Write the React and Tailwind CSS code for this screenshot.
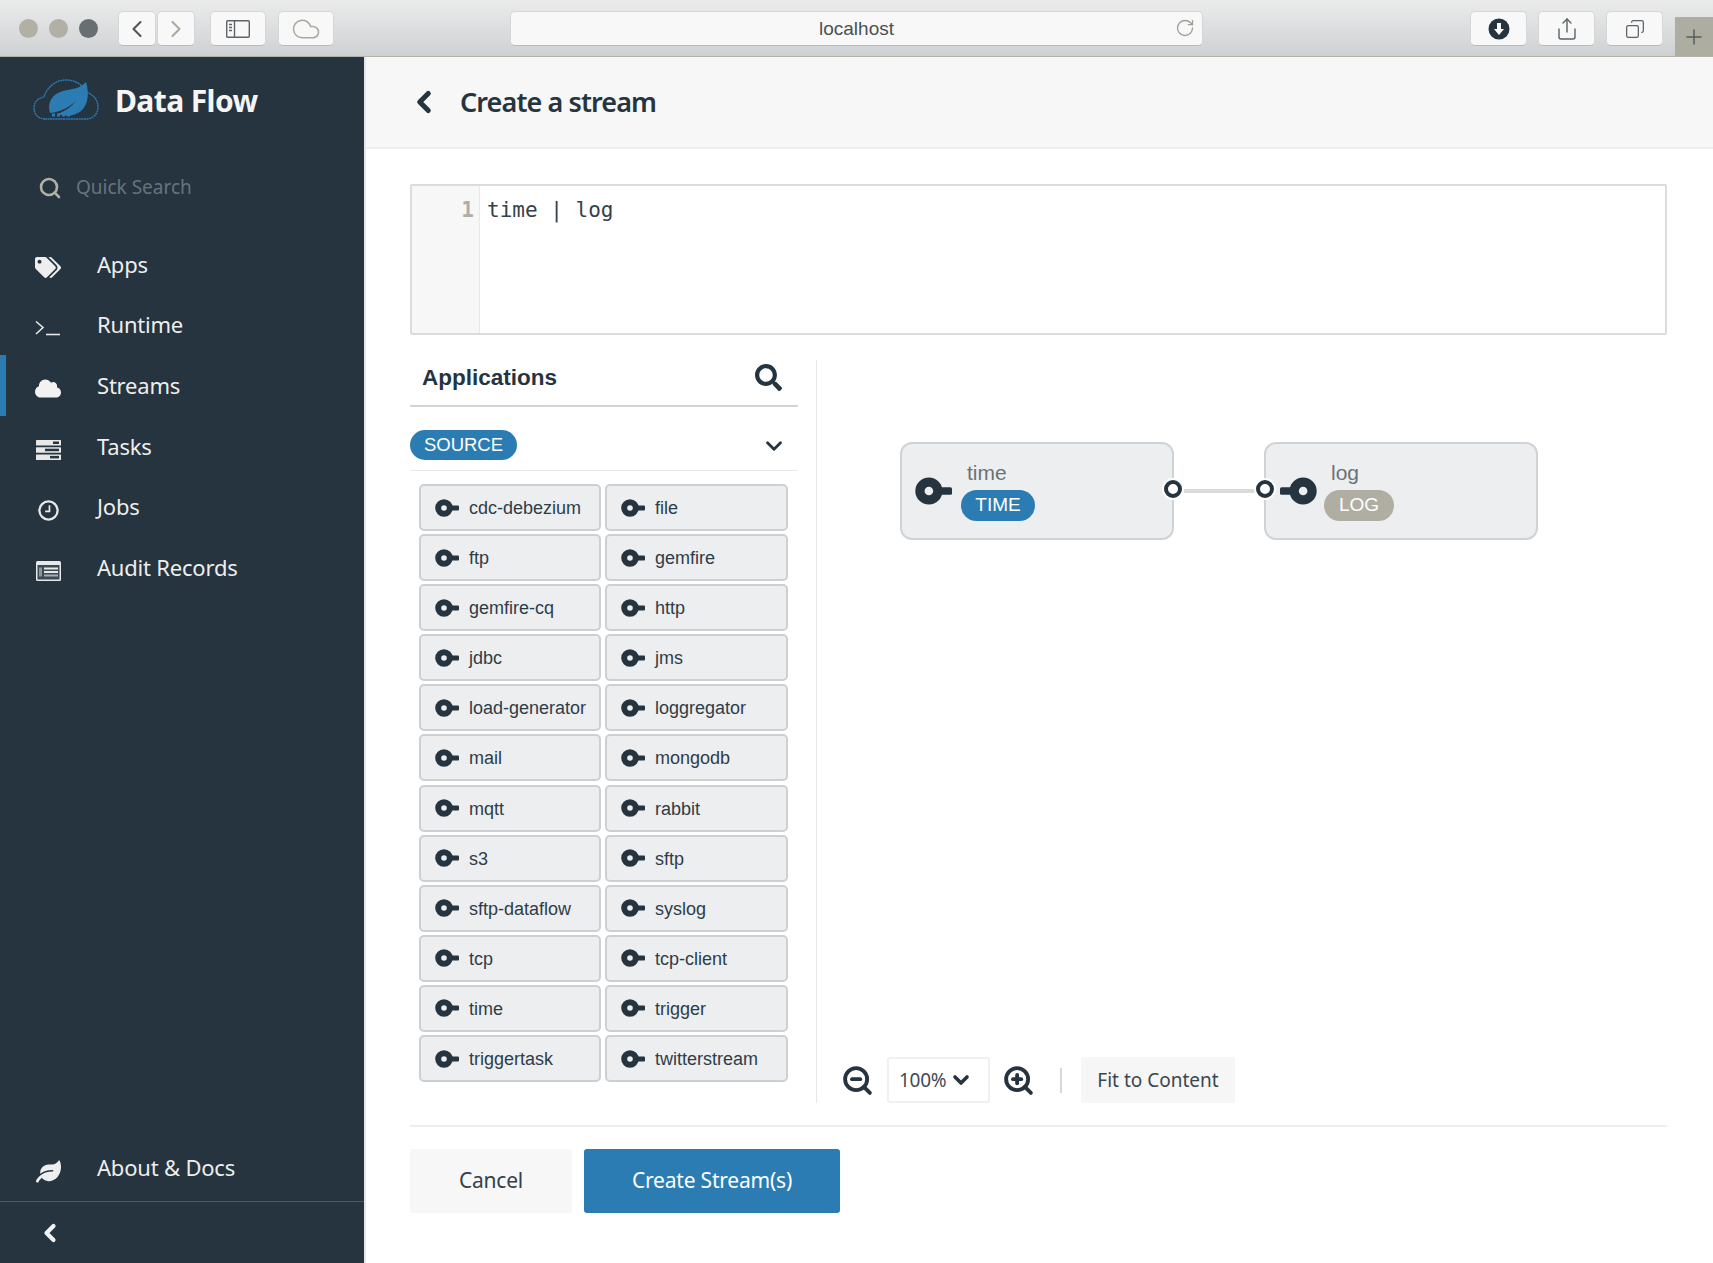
import React from 'react';
import { ChevronLeft, ChevronRight, ChevronDown, Cloud, Copy, Plus, RotateCw, Search, Share, ZoomIn, ZoomOut } from 'lucide-react';
import { FaTags, FaCloud, FaLeaf, FaSearch } from 'react-icons/fa';

const apps = [
    'cdc-debezium', 'file', 'ftp', 'gemfire', 'gemfire-cq', 'http', 'jdbc', 'jms',
    'load-generator', 'loggregator', 'mail', 'mongodb', 'mqtt', 'rabbit', 's3', 'sftp',
    'sftp-dataflow', 'syslog', 'tcp', 'tcp-client', 'time', 'trigger', 'triggertask', 'twitterstream'
];

const PortIcon = ({ className = '' }) => (
    <svg viewBox="0 0 24 18" className={className}>
        <path d="M14 6.5H23Q24 6.5 24 7.5V10.5Q24 11.5 23 11.5H14Z" fill="#25343f" />
        <circle cx="9" cy="9" r="5.8" fill="none" stroke="#25343f" strokeWidth="6" />
    </svg>
);

const TerminalIcon = () => (
    <svg viewBox="0 0 26 16" className="w-[26px] h-[16px]" fill="none" stroke="#e8e8e8" strokeWidth="1.6">
        <path d="M1 1.5 8 7.5 1 14" />
        <path d="M11 14.5H25" />
    </svg>
);

const TasksIcon = () => (
    <svg viewBox="0 0 25 20" className="w-[25px] h-[20px]">
        <rect x="0" y="0" width="25" height="5.5" rx="0.5" fill="#e8e8e8" />
        <rect x="0" y="7.2" width="25" height="5.5" rx="0.5" fill="#e8e8e8" />
        <rect x="0" y="14.4" width="25" height="5.5" rx="0.5" fill="#e8e8e8" />
        <rect x="17" y="1.5" width="6" height="2.5" fill="#25343f" />
        <rect x="9" y="8.7" width="14" height="2.5" fill="#25343f" />
        <rect x="14" y="15.9" width="9" height="2.5" fill="#25343f" />
    </svg>
);

const ClockIcon = () => (
    <svg viewBox="0 0 24 24" className="w-[23px] h-[23px]" fill="none" stroke="#e8e8e8">
        <circle cx="12" cy="12" r="9.5" strokeWidth="2.4" />
        <path d="M13 6.5V13H8.5" strokeWidth="1.8" />
    </svg>
);

const AuditIcon = () => (
    <svg viewBox="0 0 25 20" className="w-[25px] h-[20px]">
        <rect x="0" y="0" width="25" height="20" rx="1.5" fill="#e8e8e8" />
        <rect x="1.5" y="4" width="22" height="14.5" fill="#3c4a54" />
        <rect x="8" y="6.5" width="14" height="2" fill="#e8e8e8" />
        <rect x="8" y="10" width="14" height="2" fill="#e8e8e8" />
        <rect x="8" y="13.5" width="14" height="2" fill="#9fb0bb" />
        <rect x="3" y="6.5" width="3" height="9" fill="#8a969e" />
    </svg>
);

const LogoIcon = () => (
    <svg viewBox="0 0 66 46" className="w-[66px] h-[46px]">
        <path d="M12 41C5 41 1 36 1 30C1 24 5 20 11 19C14 9 23 2 33 2C42 2 49 6 53 14C60 16 65 22 65 29C65 36 60 41 53 41Z" fill="none" stroke="#2c7cb4" strokeWidth="1.4" strokeDasharray="2 0.6" />
        <path d="M17 35C14 26 18 16 30 13C38 11 47 11 53 4C56 14 56 26 48 33C42 38 33 39 25 36C32 33 38 29 43 23C36 29 28 34 17 35Z" fill="#2c7cb4" />
        <path d="M19 37H38" stroke="#2c7cb4" strokeWidth="3" strokeDasharray="3 2" />
    </svg>
);

const DownloadIcon = () => (
    <svg viewBox="0 0 22 22" className="w-[22px] h-[22px]">
        <circle cx="11" cy="11" r="10.5" fill="#25343f" />
        <path d="M9 5H13V11H16L11 17 6 11H9Z" fill="#fff" />
    </svg>
);

const SidebarToggleIcon = () => (
    <svg viewBox="0 0 24 18" className="w-[24px] h-[18px]" fill="none" stroke="#5d6468" strokeWidth="1.4">
        <rect x="0.7" y="0.7" width="22.6" height="16.6" rx="1" />
        <path d="M8.5 1V17" />
        <path d="M3 4.5H6M3 7.5H6M3 10.5H6" />
    </svg>
);

const ToolbarButton = ({ className = '', children }) => (
    <div className={`h-[35px] bg-[#f8f8f8] border border-[#d4d6d8] border-b-[#b9bab4] rounded-[5px] flex items-center justify-center ${className}`}>
        {children}
    </div>
);

const BrowserBar = () => (
    <div className="relative h-[57px] shrink-0 bg-gradient-to-b from-[#ebebeb] to-[#ced1d3] border-b border-[#b3b3aa] flex items-start pt-[11px]">
        <div className="flex items-center gap-[11px] pl-[19px] pr-[20px] h-[35px]">
            <span className="w-[19px] h-[19px] rounded-full bg-[#b2b0a5]" />
            <span className="w-[19px] h-[19px] rounded-full bg-[#b2b0a5]" />
            <span className="w-[19px] h-[19px] rounded-full bg-[#686f73]" />
        </div>
        <div className="flex gap-[1px]">
            <ToolbarButton className="w-[38px]"><ChevronLeft size={28} color="#4e5558" strokeWidth={1.8} /></ToolbarButton>
            <ToolbarButton className="w-[38px]"><ChevronRight size={28} color="#a9a89d" strokeWidth={1.8} /></ToolbarButton>
        </div>
        <ToolbarButton className="w-[56px] ml-[15px]"><SidebarToggleIcon /></ToolbarButton>
        <ToolbarButton className="w-[56px] ml-[12px]"><Cloud size={30} color="#a9a89d" strokeWidth={1.2} /></ToolbarButton>
        <div className="w-[693px] h-[35px] ml-[176px] pt-[2px] bg-[#f8f8f8] border border-[#d4d6d8] border-b-[#b9bab4] rounded-[5px] flex items-center justify-center relative font-['Liberation_Sans',sans-serif] text-[19px] text-[#4a5054]">
            localhost
            <RotateCw size={20} color="#a0a098" strokeWidth={1.6} className="absolute right-[7px] top-[6px]" />
        </div>
        <ToolbarButton className="w-[57px] ml-[267px]"><DownloadIcon /></ToolbarButton>
        <ToolbarButton className="w-[57px] ml-[11px]"><Share size={24} color="#5a6266" strokeWidth={1.4} /></ToolbarButton>
        <ToolbarButton className="w-[57px] ml-[11px]"><Copy size={20} color="#5a6266" strokeWidth={1.5} className="scale-x-[-1]" /></ToolbarButton>
        <div className="absolute right-0 bottom-0 w-[38px] h-[39px] bg-[#aeada2] flex items-center justify-center">
            <Plus size={24} color="#555c60" strokeWidth={1.5} />
        </div>
    </div>
);

const NavItem = ({ icon, label, active }) => (
    <div className={`relative h-[60.6px] flex items-center ${active ? 'border-l-[6px] border-[#2c7cb4] pl-[29px]' : 'pl-[35px]'}`}>
        <div className="w-[26px] flex justify-center mt-[7px]">{icon}</div>
        <span className="ml-[36px] text-[22px] tracking-[-0.2px] text-[#eeeeee]">{label}</span>
    </div>
);

const Sidebar = () => (
    <aside className="w-[366px] shrink-0 bg-[#25343f] border-r-2 border-[#e5e8e8] flex flex-col font-['Noto_Sans',sans-serif]">
        <div className="flex items-center h-[88px] pl-[33px] pb-[1px]">
            <LogoIcon />
            <span className="ml-[16px] text-[30px] leading-none font-bold text-[#f5f5f5] tracking-[-0.6px]">Data Flow</span>
        </div>
        <div className="flex items-center h-[82px] pl-[38px] pt-[3px]">
            <Search size={24} color="#b2b0a5" strokeWidth={2.6} />
            <span className="ml-[14px] text-[19px] text-[#67747c]">Quick Search</span>
        </div>
        <nav className="mt-[7px]">
            <NavItem icon={<FaTags size={27} color="#eeeeee" />} label="Apps" />
            <NavItem icon={<TerminalIcon />} label="Runtime" />
            <NavItem icon={<FaCloud size={27} color="#f2f2f2" />} label="Streams" active />
            <NavItem icon={<TasksIcon />} label="Tasks" />
            <NavItem icon={<ClockIcon />} label="Jobs" />
            <NavItem icon={<AuditIcon />} label="Audit Records" />
        </nav>
        <div className="mt-auto">
            <div className="pb-[3px]">
                <NavItem icon={<FaLeaf size={25} color="#eeeeee" />} label="About & Docs" />
            </div>
            <div className="h-[62px] border-t border-[#4a5862] pl-[36px] flex items-center">
                <ChevronLeft size={28} color="#f2f2f2" strokeWidth={3.6} />
            </div>
        </div>
    </aside>
);

const AppButton = ({ name }) => (
    <div className="h-[47px] bg-[#eceef0] border-2 border-[#cdd0d3] rounded-[5px] flex items-center pl-[14px] text-[18px] text-[#2f3d47] whitespace-nowrap">
        <PortIcon className="w-[24px] h-[18px] shrink-0" />
        <span className="ml-[10px] mt-[2px]">{name}</span>
    </div>
);

const Palette = () => (
    <div className="w-[388px] shrink-0 font-['Liberation_Sans',sans-serif]">
        <div className="h-[47px] border-b-2 border-[#d0d4d8] flex items-center justify-between pl-[12px] pr-[16px] pb-[10px]">
            <span className="text-[22.5px] font-bold text-[#25343f]">Applications</span>
            <FaSearch size={27} color="#25343f" />
        </div>
        <div className="h-[64px] border-b border-[#e6e8ea] flex items-center justify-between pr-[11px] pt-[12px]">
            <span className="h-[30px] w-[107px] rounded-full bg-[#2c7cb4] text-white text-[18.5px] font-medium flex items-center justify-center">SOURCE</span>
            <ChevronDown size={26} color="#25343f" strokeWidth={2.6} className="mt-[3px]" />
        </div>
        <div className="grid grid-cols-[182px_183px] gap-x-[4px] gap-y-[3.1px] pl-[9px] pt-[13px]">
            {apps.map((name) => <AppButton key={name} name={name} />)}
        </div>
    </div>
);

const StreamNode = ({ name, badge, flip, badgeClass }) => (
    <div className="relative w-[274px] h-[98px] bg-[#eceef0] border-2 border-[#d0d3d6] rounded-[12px] flex items-center">
        <PortIcon className={`absolute top-[33px] w-[37px] h-[28px] ${flip ? 'left-[14px] scale-x-[-1]' : 'left-[13px]'}`} />
        <div className="ml-[61px] pt-[2px] font-['Liberation_Sans',sans-serif] text-[#6d7275]">
            <div className="text-[21px] leading-[24px] ml-[4px] mt-[-2px]">{name}</div>
            <div className={`mt-[5px] h-[31px] rounded-full text-white text-[19px] flex items-center justify-center ${badgeClass}`}>{badge}</div>
        </div>
    </div>
);

const PortDot = ({ className }) => (
    <span className={`absolute top-[36px] w-[22px] h-[22px] rounded-full bg-white flex items-center justify-center ${className}`}>
        <span className="w-[18px] h-[18px] rounded-full border-[4.5px] border-[#25343f] bg-white" />
    </span>
);

const Canvas = () => (
    <div className="flex-1 ml-[18px] border-l border-[#e5e7e9] flex flex-col font-['Noto_Sans',sans-serif]">
        <div className="flex items-center pl-[83px] pt-[82px]">
            <StreamNode name="time" badge="TIME" badgeClass="w-[74px] bg-[#2c7cb4] ml-[-2px]" />
            <div className="relative w-[90px] h-[98px] flex items-center z-10">
                <div className="w-full h-[4px] bg-[#d8dadc]" />
                <PortDot className="left-[-12px]" />
                <PortDot className="right-[-12px]" />
            </div>
            <StreamNode name="log" badge="LOG" badgeClass="w-[70px] bg-[#b0aea2] ml-[-3px]" flip />
        </div>
        <div className="mt-auto flex items-center h-[46px] pl-[24px] text-[#2f3d47]">
            <ZoomOut size={33} color="#25343f" strokeWidth={2.8} />
            <div className="ml-[13px] w-[103px] h-[46px] border-2 border-[#eef0f1] rounded-[3px] flex items-center pl-[10px] text-[19px] tracking-[-0.3px] text-[#3f4b54]">
                100%
                <ChevronDown size={24} color="#25343f" strokeWidth={3.6} className="ml-[3px]" />
            </div>
            <ZoomIn size={33} color="#25343f" strokeWidth={2.8} className="ml-[12px]" />
            <div className="ml-[25px] w-[2px] h-[25px] bg-[#d5d8da]" />
            <div className="ml-[19px] w-[154px] h-[46px] bg-[#f6f6f6] rounded-[3px] flex items-center justify-center text-[19px] text-[#3a4750]">Fit to Content</div>
        </div>
    </div>
);

const App = () => {
    return (
        <div className="w-[1713px] h-[1263px] overflow-hidden bg-white flex flex-col">
            <BrowserBar />
            <div className="flex flex-1 min-h-0">
                <Sidebar />
                <main className="flex-1 flex flex-col min-w-0">
                    <header className="h-[92px] shrink-0 bg-[#f7f7f7] border-b-2 border-[#eeeeee] flex items-center pl-[41px] font-['Noto_Sans',sans-serif]">
                        <ChevronLeft size={34} color="#25343f" strokeWidth={3.6} />
                        <h1 className="ml-[19px] text-[27px] font-semibold text-[#25343f] tracking-[-0.9px]">Create a stream</h1>
                    </header>
                    <div className="flex-1 flex flex-col pl-[44px] pr-[46px] pt-[35px]">
                        <div className="h-[151px] shrink-0 border-2 border-[#dadcde] rounded-[2px] flex font-['DejaVu_Sans_Mono',monospace] text-[21px] leading-[26px]">
                            <div className="w-[68px] bg-[#f7f7f7] border-r border-[#e8e8e8] text-right pr-[5px] pt-[11px] text-[#b0aea2] font-bold">1</div>
                            <div className="pl-[7px] pt-[11px] text-[#33414b] whitespace-pre">time | log</div>
                        </div>
                        <div className="flex h-[743px] mt-[25px] shrink-0">
                            <Palette />
                            <Canvas />
                        </div>
                        <div className="mt-[22px] border-t-2 border-[#eeeeee] pt-[22px] flex gap-[12px] font-['Noto_Sans',sans-serif] text-[21px] tracking-[-0.2px]">
                            <button className="w-[162px] h-[64px] bg-[#f7f7f7] rounded-[3px] text-[#33414b]">Cancel</button>
                            <button className="w-[256px] h-[64px] bg-[#2c7cb4] rounded-[3px] text-white">Create Stream(s)</button>
                        </div>
                    </div>
                </main>
            </div>
        </div>
    );
};

export default App;
